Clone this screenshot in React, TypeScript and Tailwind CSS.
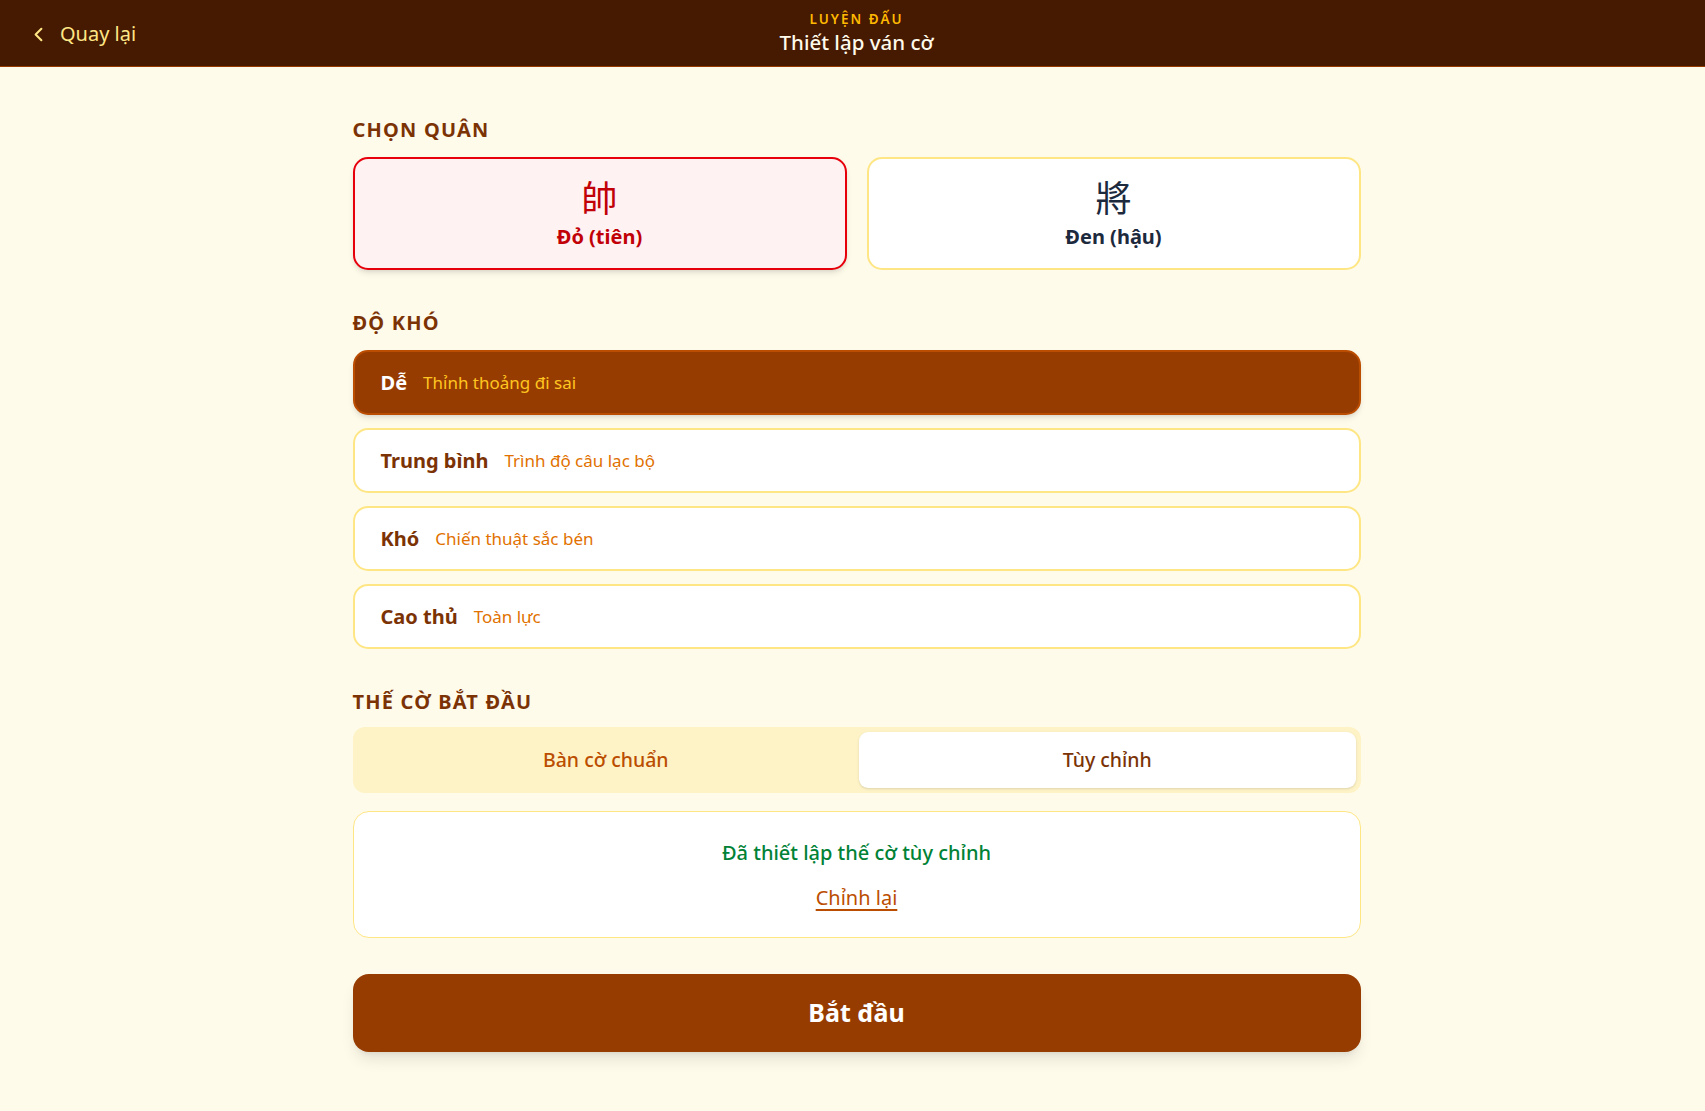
import { useState } from "react";
import { ChevronLeft } from "lucide-react";

const levels = [
  { key: "easy", label: "Dễ", desc: "Thỉnh thoảng đi sai" },
  { key: "medium", label: "Trung bình", desc: "Trình độ câu lạc bộ" },
  { key: "hard", label: "Khó", desc: "Chiến thuật sắc bén" },
  { key: "master", label: "Cao thủ", desc: "Toàn lực" },
];

function SectionTitle({ children, tight }: { children: React.ReactNode; tight?: boolean }) {
  return (
    <h2 className={tight
      ? "mb-[11px] text-[20px] leading-[28px] font-bold tracking-[0.06em] text-[#7b3306]"
      : "mb-[13px] text-[20px] leading-[28px] font-bold tracking-[0.06em] text-[#7b3306]"}
    >
      {children}
    </h2>
  );
}

export default function App() {
  const [side, setSide] = useState<"red" | "black">("red");
  const [level, setLevel] = useState("easy");
  const [mode, setMode] = useState<"standard" | "custom">("custom");

  return (
    <div className="min-h-screen bg-[#fffbeb] font-['Noto_Sans','Noto_Sans_CJK_TC',sans-serif]">
      <header className="relative flex h-[67px] items-center border-b border-[#973c00] bg-[#461901] pl-[8px]">
        <button className="absolute left-[27px] top-1/2 flex -translate-y-1/2 items-center gap-[10px] pt-[2px] text-[20px] text-[#fee685]">
          <ChevronLeft size={23} strokeWidth={2.2} />
          <span>Quay lại</span>
        </button>
        <div className="mx-auto flex flex-col items-center pt-[1px]">
          <span className="text-[13.5px] leading-[18px] font-semibold tracking-[0.15em] text-[#ffb900]">LUYỆN ĐẤU</span>
          <span className="text-[20.5px] leading-[29px] font-medium text-[#fffbeb]">Thiết lập ván cờ</span>
        </div>
      </header>

      <main className="pl-[8px]">
        <div className="mx-auto w-full max-w-[1008px] pt-[49px] pb-[40px]">
          <section>
            <SectionTitle>CHỌN QUÂN</SectionTitle>
            <div className="grid grid-cols-2 gap-5">
              <button
                onClick={() => setSide("red")}
                className={side === "red"
                  ? "flex h-[113px] flex-col items-center justify-center rounded-[15px] border-2 border-[#e7000b] bg-[#fef2f2] pt-[2px] shadow-md"
                  : "flex h-[113px] flex-col items-center justify-center rounded-[15px] border-2 border-[#fee685] bg-white pt-[2px]"}
              >
                <span className="text-[36px] leading-[40px] text-[#c10007]">帥</span>
                <span className="mt-1 text-[20px] leading-[28px] font-bold text-[#c10007]">Đỏ (tiên)</span>
              </button>
              <button
                onClick={() => setSide("black")}
                className={side === "black"
                  ? "flex h-[113px] flex-col items-center justify-center rounded-[15px] border-2 border-[#1d293d] bg-[#f1f5f9] pt-[2px] shadow-md"
                  : "flex h-[113px] flex-col items-center justify-center rounded-[15px] border-2 border-[#fee685] bg-white pt-[2px]"}
              >
                <span className="text-[36px] leading-[40px] text-[#1d293d]">將</span>
                <span className="mt-1 text-[20px] leading-[28px] font-bold text-[#1d293d]">Đen (hậu)</span>
              </button>
            </div>
          </section>

          <section className="mt-[39px]">
            <SectionTitle>ĐỘ KHÓ</SectionTitle>
            <div className="flex flex-col gap-[13px]">
              {levels.map((l) => (
                <button
                  key={l.key}
                  onClick={() => setLevel(l.key)}
                  className={level === l.key
                    ? "flex h-[65px] items-center gap-[16px] rounded-[15px] border-2 border-[#bb4d00] bg-[#973c00] px-[26px] shadow-md"
                    : "flex h-[65px] items-center gap-[16px] rounded-[15px] border-2 border-[#fee685] bg-white px-[26px]"}
                >
                  <span className={level === l.key ? "text-[20px] font-bold text-white" : "text-[20px] font-bold text-[#7b3306]"}>{l.label}</span>
                  <span className={level === l.key ? "text-[17px] text-[#ffc520]" : "text-[17px] text-[#e17100]"}>{l.desc}</span>
                </button>
              ))}
            </div>
          </section>

          <section className="mt-[39px]">
            <SectionTitle tight>THẾ CỜ BẮT ĐẦU</SectionTitle>
            <div className="grid h-[66px] grid-cols-2 gap-[5px] rounded-[12px] bg-[#fef3c6] p-[5px]">
              <button
                onClick={() => setMode("standard")}
                className={mode === "standard"
                  ? "rounded-[9px] bg-white text-[19.5px] font-medium text-[#7b3306] shadow-sm"
                  : "rounded-[9px] text-[19.5px] font-medium text-[#bb4d00]"}
              >
                Bàn cờ chuẩn
              </button>
              <button
                onClick={() => setMode("custom")}
                className={mode === "custom"
                  ? "rounded-[9px] bg-white text-[19.5px] font-medium text-[#7b3306] shadow-sm"
                  : "rounded-[9px] text-[19.5px] font-medium text-[#bb4d00]"}
              >
                Tùy chỉnh
              </button>
            </div>

            {mode === "custom" && (
              <div className="mt-[18px] flex h-[127px] flex-col items-center justify-center gap-[18px] rounded-[16px] border border-[#fee685] bg-white">
                <p className="text-[20px] leading-[27px] font-medium text-[#008236]">Đã thiết lập thế cờ tùy chỉnh</p>
                <button className="text-[20px] leading-[27px] text-[#bb4d00] underline underline-offset-4">Chỉnh lại</button>
              </div>
            )}
          </section>

          <button className="mt-[36px] flex h-[78px] w-full items-center justify-center rounded-[16px] bg-[#973c00] text-[25px] font-bold text-white shadow-lg">
            Bắt đầu
          </button>
        </div>
      </main>
    </div>
  );
}
